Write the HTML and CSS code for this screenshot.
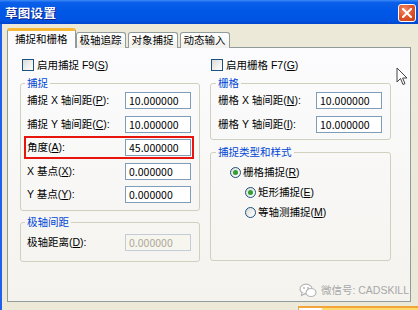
FILE: index.html
```html
<!DOCTYPE html>
<html lang="zh-CN">
<head>
    <meta charset="UTF-8">
    <meta name="viewport" content="width=device-width, initial-scale=1.0">
    <title>草图设置</title>
    <link rel="stylesheet" href="styles.css">
</head>
<body>
    <div class="window">
        <!-- 標題列 -->
        <div class="titlebar">
            <span class="title">草图设置</span>
            <button class="close-btn" aria-label="关闭">
                <svg width="10" height="10" viewBox="0 0 10 10">
                    <path d="M1 1 L9 9 M9 1 L1 9" stroke="#fff" stroke-width="2" stroke-linecap="square"/>
                </svg>
            </button>
        </div>

        <div class="client">
            <div class="tabs">
                <div class="tab active">捕捉和栅格</div>
                <div class="tab">极轴追踪</div>
                <div class="tab">对象捕捉</div>
                <div class="tab">动态输入</div>
            </div>

            <div class="panel">
                <!-- 左欄 -->
                <div class="col col-left">
                    <label class="check"><span class="box"></span><span>启用捕捉 F9(<u>S</u>)</span></label>

                    <fieldset class="group group-snap">
                        <legend>捕捉</legend>
                        <div class="row"><span class="lbl">捕捉 X 轴间距(<u>P</u>):</span><input class="field" type="text" value="10.000000"></div>
                        <div class="row"><span class="lbl">捕捉 Y 轴间距(<u>C</u>):</span><input class="field" type="text" value="10.000000"></div>
                        <div class="row highlight"><span class="lbl">角度(<u>A</u>):</span><input class="field" type="text" value="45.000000"></div>
                        <div class="row"><span class="lbl">X 基点(<u>X</u>):</span><input class="field" type="text" value="0.000000"></div>
                        <div class="row"><span class="lbl">Y 基点(<u>Y</u>):</span><input class="field" type="text" value="0.000000"></div>
                    </fieldset>

                    <fieldset class="group group-polar">
                        <legend>极轴间距</legend>
                        <div class="row"><span class="lbl">极轴距离(<u>D</u>):</span><input class="field" type="text" value="0.000000" disabled></div>
                    </fieldset>
                </div>

                <!-- 右欄 -->
                <div class="col col-right">
                    <label class="check"><span class="box"></span><span>启用栅格 F7(<u>G</u>)</span></label>

                    <fieldset class="group group-grid">
                        <legend>栅格</legend>
                        <div class="row"><span class="lbl">栅格 X 轴间距(<u>N</u>):</span><input class="field" type="text" value="10.000000"></div>
                        <div class="row"><span class="lbl">栅格 Y 轴间距(<u>I</u>):</span><input class="field" type="text" value="10.000000"></div>
                    </fieldset>

                    <fieldset class="group group-type">
                        <legend>捕捉类型和样式</legend>
                        <label class="radio"><span class="dot checked"></span><span>栅格捕捉(<u>R</u>)</span></label>
                        <label class="radio sub"><span class="dot checked"></span><span>矩形捕捉(<u>E</u>)</span></label>
                        <label class="radio sub"><span class="dot"></span><span>等轴测捕捉(<u>M</u>)</span></label>
                    </fieldset>
                </div>

                <div class="watermark">
                    <svg width="18" height="15" viewBox="0 0 18 15">
                        <ellipse cx="7" cy="6" rx="6" ry="4.8" fill="#fff" stroke="#b4b4b4" stroke-width="1.2"/>
                        <path d="M3 9.5 L2.5 12.5 L6 10.6" fill="#fff" stroke="#b4b4b4" stroke-width="1.2"/>
                        <ellipse cx="12" cy="9.5" rx="5" ry="4" fill="#fff" stroke="#b4b4b4" stroke-width="1.2"/>
                        <circle cx="5" cy="5" r="0.9" fill="#b4b4b4"/>
                        <circle cx="9" cy="5" r="0.9" fill="#b4b4b4"/>
                    </svg>
                    <span>微信号: CADSKILL</span>
                </div>
            </div>

            <div class="footer">
                <span class="btn-edge"></span>
            </div>
        </div>
    </div>

    <svg class="cursor" width="13" height="20" viewBox="0 0 13 20">
        <path d="M1 1 L1 15 L4.5 11.5 L7 17.5 L9 16.6 L6.6 11 L11 11 Z" fill="#fff" stroke="#444" stroke-width="1"/>
    </svg>
</body>
</html>
```

FILE: styles.css
```css
* {
    margin: 0;
    padding: 0;
    box-sizing: border-box;
}

body {
    width: 418px;
    height: 310px;
    overflow: hidden;
    position: relative;
    background: #ece9d8;
    font-family: "Liberation Sans", "Noto Sans CJK SC", sans-serif;
    font-size: 10.5px;
    line-height: 13px;
    color: #000;
}

u {
    text-decoration: underline;
    text-underline-offset: 1px;
}

/* 標題列 */
.titlebar {
    height: 24px;
    display: flex;
    align-items: center;
    justify-content: space-between;
    padding: 0 2px 0 5px;
    background: linear-gradient(to bottom, #3d8cf7 0%, #0b5fe9 10%, #0057e7 45%, #0053e2 85%, #0045cc 100%);
}

.title {
    color: #fff;
    font-family: "Noto Sans CJK SC", sans-serif;
    font-size: 12.5px;
    font-weight: bold;
    letter-spacing: 0.3px;
    text-shadow: 1px 1px 0 #0a1f8c;
}

.close-btn {
    width: 18px;
    height: 18px;
    display: flex;
    align-items: center;
    justify-content: center;
    border: 1px solid #fff;
    border-radius: 3px;
    background: radial-gradient(circle at 35% 30%, #f08c6a 0%, #e2582e 45%, #c13b15 100%);
    margin-top: 1px;
}

/* 客戶區 */
.client {
    height: 286px;
    border-left: 2px solid #1f5ff0;
    padding: 4px 0 0 5px;
}

.tabs {
    display: flex;
    align-items: flex-end;
    height: 20px;
    margin-bottom: -1px;
    position: relative;
    z-index: 1;
}

.tab {
    height: 16px;
    padding: 0 3px;
    margin-right: 2px;
    border: 1px solid #919b9c;
    border-bottom: none;
    border-radius: 3px 3px 0 0;
    background: linear-gradient(to bottom, #ffffff, #f1f0eb);
    line-height: 15px;
    white-space: nowrap;
}

.tab.active {
    height: 20px;
    padding: 0 7px;
    margin-right: 0;
    line-height: 17px;
    background: #fcfcfe;
    border-top: 3px solid #f7b733;
}

.panel {
    position: relative;
    width: 404px;
    height: 255px;
    display: flex;
    gap: 10px;
    padding: 10px 19px 0 12px;
    border: 1px solid #919b9c;
    background: linear-gradient(to bottom, #fcfcfe, #f4f3ee);
}

.col-left {
    width: 180px;
}

.col-right {
    width: 181px;
}

.check {
    display: flex;
    align-items: center;
    gap: 3px;
    height: 14px;
    margin-left: 2px;
    white-space: nowrap;
}

.col-right .check {
    margin-left: 1px;
}

.box {
    width: 12px;
    height: 12px;
    border: 1px solid #1c5180;
    background: linear-gradient(135deg, #dcdcd7, #ffffff);
}

/* 群組框 */
.group {
    border: 1px solid #d0d0bf;
    border-radius: 3px;
    margin-top: 5px;
    padding: 3px 8px 7px 6px;
}

.group legend {
    color: #0046d5;
    line-height: 12px;
    padding: 0 2px;
    margin-left: -2px;
}

.group .row + .row {
    margin-top: 6.5px;
}

.row {
    display: flex;
    align-items: center;
    justify-content: space-between;
    height: 17px;
    white-space: nowrap;
}

.field {
    width: 66px;
    height: 17px;
    padding: 0 3px;
    border: 1px solid #7f9db9;
    background: #fff;
    font-family: "Noto Sans CJK SC", "Liberation Sans", sans-serif;
    font-size: 10.5px;
    color: #000;
    outline: none;
}

.field:disabled {
    background: #f6f5ee;
    border-color: #c4ccd8;
    color: #aca899;
}

.row.highlight {
    outline: 2px solid #e8140e;
    outline-offset: 1px;
}

.group-polar {
    padding-top: 6px;
    padding-bottom: 10px;
}

.group-grid {
    padding: 3px 8px 6px 7px;
}

.group-grid .row + .row {
    margin-top: 7px;
}

.group-type {
    margin-top: 6px;
    padding: 7px 8px 41px 7px;
}

.radio {
    display: flex;
    align-items: center;
    gap: 2px;
    height: 14px;
    margin-left: 12px;
    white-space: nowrap;
}

.radio + .radio {
    margin-top: 6px;
}

.radio.sub {
    margin-left: 27px;
}

.dot {
    position: relative;
    width: 11px;
    height: 11px;
    border: 1px solid #1c5180;
    border-radius: 50%;
    background: linear-gradient(135deg, #dcdcd7, #ffffff);
}

.dot.checked::after {
    content: '';
    position: absolute;
    top: 2px;
    left: 2px;
    width: 5px;
    height: 5px;
    border-radius: 50%;
    background: #2fa02f;
}

/* 浮水印 */
.watermark {
    position: absolute;
    right: 1px;
    bottom: 3px;
    display: flex;
    align-items: center;
    gap: 4px;
    color: #a8a8a8;
    font-size: 10.5px;
    white-space: nowrap;
}

.footer {
    margin-top: 4px;
    padding-left: 291px;
}

.btn-edge {
    display: block;
    width: 130px;
    height: 8px;
    border-top: 2px solid #f3a53a;
    border-left: 1px solid #e9a84a;
    background: linear-gradient(to right, #ffffff 0, #ffffff 23px, #fddb70 23px);
}

.cursor {
    position: absolute;
    left: 396px;
    top: 67px;
}
```
